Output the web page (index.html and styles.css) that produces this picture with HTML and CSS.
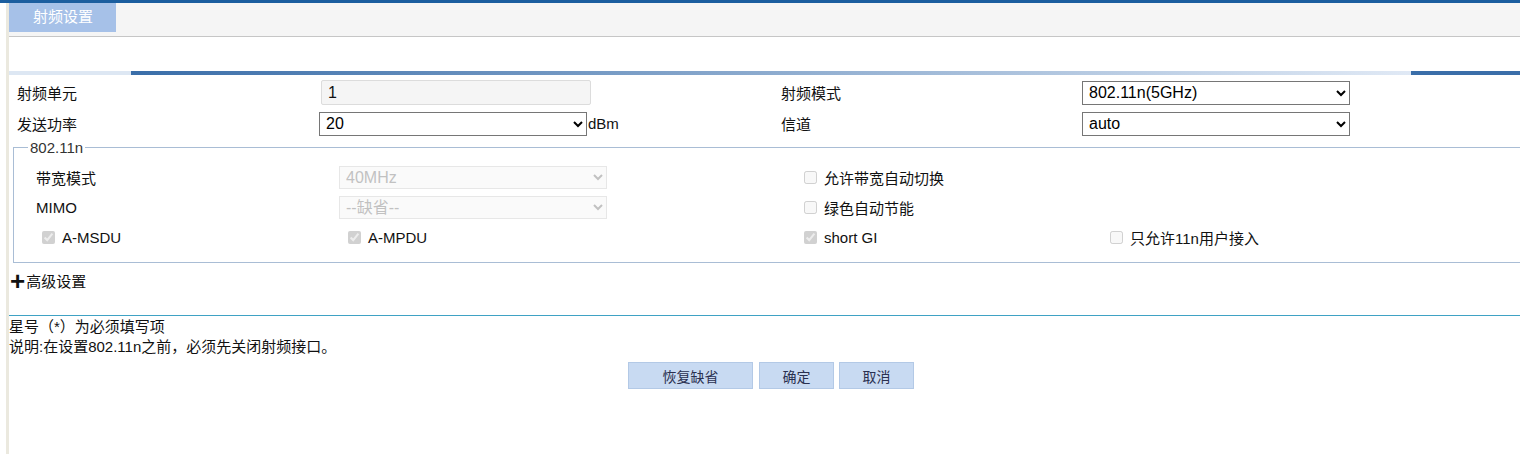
FILE: index.html
```html
<!DOCTYPE html>
<html lang="zh-CN">
<head>
<meta charset="utf-8">
<title>射频设置</title>
<link rel="stylesheet" href="styles.css">
</head>
<body>
<div class="topbar"></div>
<div class="main">
  <div class="tabs"><div class="tab">射频设置</div></div>
  <div class="band"><div class="seg1"></div><div class="seg2"></div><div class="seg3"></div></div>
  <div class="grid outer">
    <div class="lbl">射频单元</div>
    <div class="cell"><input class="txt" type="text" value="1" readonly></div>
    <div class="lbl">射频模式</div>
    <div class="cell"><select class="sel"><option>802.11n(5GHz)</option></select></div>
    <div class="lbl">发送功率</div>
    <div class="cell"><select class="sel"><option>20</option></select><span class="unit">dBm</span></div>
    <div class="lbl">信道</div>
    <div class="cell"><select class="sel"><option>auto</option></select></div>
  </div>
  <fieldset class="fs">
    <legend>802.11n</legend>
    <div class="grid inner">
      <div class="lbl">带宽模式</div>
      <div class="cell"><select class="sel" disabled><option>40MHz</option></select></div>
      <div class="cell"><label class="chk"><input type="checkbox" disabled>允许带宽自动切换</label></div>
      <div class="cell"></div>
      <div class="lbl">MIMO</div>
      <div class="cell"><select class="sel" disabled><option>--缺省--</option></select></div>
      <div class="cell"><label class="chk"><input type="checkbox" disabled>绿色自动节能</label></div>
      <div class="cell"></div>
      <div class="cell"><label class="chk c1"><input type="checkbox" checked disabled>A-MSDU</label></div>
      <div class="cell"><label class="chk c2"><input type="checkbox" checked disabled>A-MPDU</label></div>
      <div class="cell"><label class="chk"><input type="checkbox" checked disabled>short GI</label></div>
      <div class="cell"><label class="chk"><input type="checkbox" disabled>只允许11n用户接入</label></div>
    </div>
  </fieldset>
  <div class="adv"><span class="plus">+</span>高级设置</div>
  <div class="notes">
    <div>星号（*）为必须填写项</div>
    <div>说明:在设置802.11n之前，必须先关闭射频接口。</div>
  </div>
  <div class="btns">
    <button class="btn wide">恢复缺省</button>
    <button class="btn">确定</button>
    <button class="btn">取消</button>
  </div>
</div>
</body>
</html>
```
FILE: styles.css
```css
html, body {
  margin: 0;
  padding: 0;
  background: #fff;
  overflow: hidden;
}
body {
  font-family: "Liberation Sans", "Noto Sans CJK SC", sans-serif;
  font-size: 15px;
  color: #111;
  height: 454px;
}
.topbar {
  height: 3px;
  background: #1b5e9f;
}
.main {
  margin-left: 6px;
  border-left: 3px solid #ebe9df;
  height: 451px;
  overflow: hidden;
}
.tabs {
  height: 33px;
  background: #f5f5f5;
  border-bottom: 1px solid #c6c6c6;
}
.tab {
  width: 107px;
  height: 29px;
  background: #a6c1e8;
  color: #fff;
  line-height: 28px;
  padding-left: 24px;
  box-sizing: border-box;
  font-size: 15px;
}
.band {
  margin-top: 34px;
  height: 4px;
  display: flex;
}
.seg1 { width: 122px; background: #dde7f3; }
.seg2 { flex: 1; background: linear-gradient(to right, #3a6ea9, #e0e9f5); }
.seg3 { width: 109px; background: #3a6ea9; }

.grid {
  display: grid;
  align-items: center;
}
.outer {
  margin-top: 5px;
  padding-left: 8px;
  grid-template-columns: 302px 462px 301px 1fr;
  row-gap: 6px;
}
.lbl, .cell {
  display: flex;
  align-items: center;
  height: 25px;
}
.txt {
  margin: 0 0 0 2px;
  width: 270px;
  height: 25px;
  box-sizing: border-box;
  border: 1px solid #dcdcdc;
  border-radius: 2px;
  background: #f5f5f5;
  font: 16px "Liberation Sans", sans-serif;
  color: #111;
  padding: 0 6px;
  outline: none;
}
.sel {
  margin: 0;
  width: 268px;
  height: 24px;
  box-sizing: border-box;
  font: 16px "Liberation Sans", "Noto Sans CJK SC", sans-serif;
  color: #000;
  background: #fff;
  border: 1px solid #767676;
  border-radius: 0;
  padding: 0 2px;
}
.sel:disabled {
  color: #a8a8a8;
  background: #f9f9f9;
  border-color: #dedede;
}
.unit {
  margin-left: 1px;
  font-size: 15px;
}
.fs {
  margin: 3px -40px 0 4px;
  padding: 10px 0 13px 22px;
  border: 1px solid #a9bdd5;
  min-width: 0;
}
.fs legend {
  margin-left: -8px;
  padding: 0 2px;
  font-size: 15px;
  color: #333;
}
.inner {
  grid-template-columns: 303px 465px 306px 1fr;
  row-gap: 7px;
}
.inner .lbl, .inner .cell { height: 23px; }
.inner .sel { height: 23px; }
.chk {
  display: flex;
  align-items: center;
  font-size: 15px;
  color: #111;
}
.chk input {
  margin: 0 7px 0 0;
  width: 13px;
  height: 13px;
}
.c1 { margin-left: 6px; }
.c2 { margin-left: 9px; }
.adv {
  margin-top: 9px;
  height: 20px;
  line-height: 20px;
  padding-left: 1px;
  font-size: 15px;
  display: flex;
  align-items: center;
}
.plus {
  font-weight: bold;
  font-size: 26px;
  margin-right: 1px;
  line-height: 20px;
  position: relative;
  top: -1px;
}
.notes {
  margin-top: 23px;
  border-top: 1px solid #3fa2c4;
  padding-top: 1px;
  font-size: 15px;
  line-height: 20px;
}
.btns {
  margin-top: 5px;
  display: flex;
  justify-content: center;
  gap: 5px;
  padding-left: 13px;
}
.btn {
  height: 27px;
  width: 75px;
  margin: 0;
  background: #c8daf2;
  border: 1px solid #b3c9e6;
  color: #2a3050;
  font: 14px "Liberation Sans", "Noto Sans CJK SC", sans-serif;
  padding: 0;
}
.btn.wide { width: 125px; margin-right: 1px; }
```
